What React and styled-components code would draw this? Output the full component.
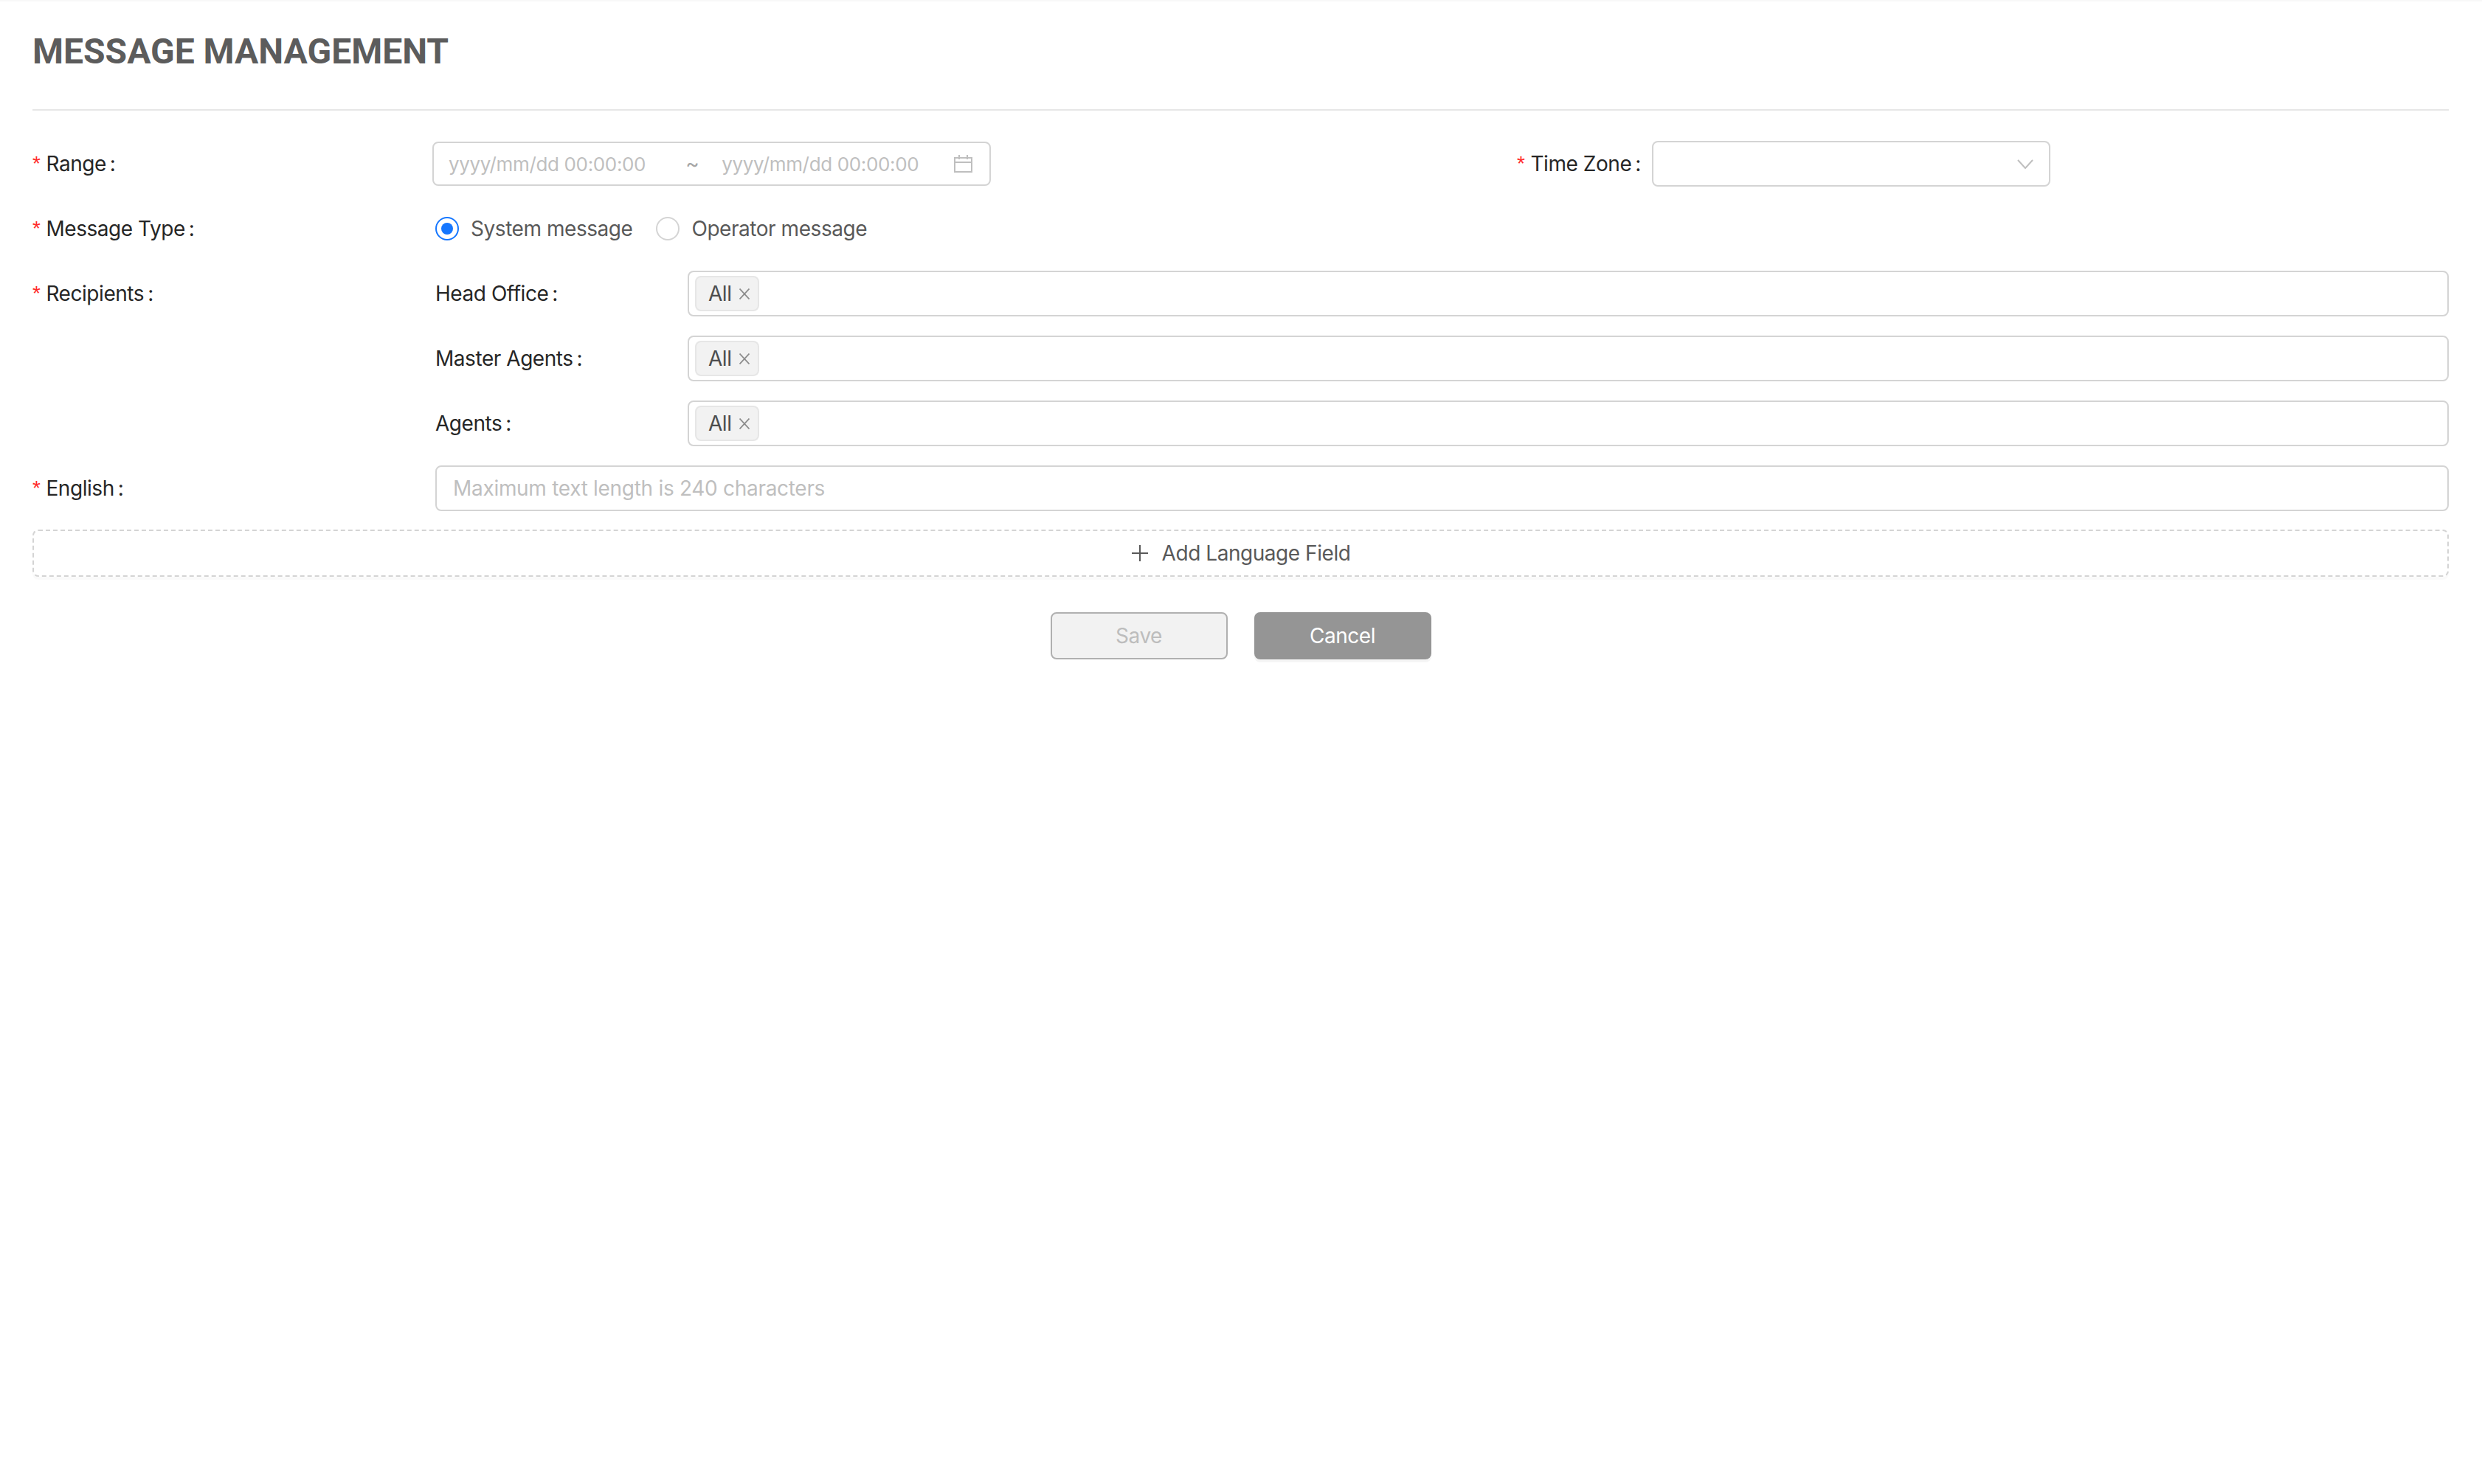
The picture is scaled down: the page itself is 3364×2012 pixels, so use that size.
import React from "react";
import styled, { createGlobalStyle } from "styled-components";

const Global = createGlobalStyle`
  html, body { margin: 0; padding: 0; background: #fff; }
  body { font-family: Inter, "Liberation Sans", sans-serif; font-size: 28px; letter-spacing: -0.45px; color: #262626; }
`;
const Page = styled.div`
  min-height: 2012px; box-sizing: border-box; padding: 0 45px 0 44px;
  border-top: 2px solid #f8f8f8; background: #fff;
`;
const Title = styled.h1`
  margin: 0; height: 148px; display: flex; align-items: center; padding-bottom: 10px; box-sizing: border-box;
  font: 700 48px/1 Roboto, sans-serif; letter-spacing: 0; color: #5c5c5c; border-bottom: 2px solid #e6e6e6;
`;
const Form = styled.div`
  display: flex; flex-direction: column; padding-top: 41px;
`;
const Row = styled.div`
  display: flex; align-items: flex-start; min-height: 62px; margin-bottom: ${p => p.$mb ?? 26}px;
`;
const Label = styled.div`
  width: 546px; flex: none; height: 62px; display: flex; align-items: center; color: #262626; white-space: nowrap;
`;
const Star = styled.span`
  color: #ff2a2a; margin-right: 8px; font: 28px/1 "Liberation Sans", sans-serif;
`;
const Colon = styled.span` margin-left: 5px; `;
const Field = styled.div`
  height: 62px; box-sizing: border-box; border: 2px solid #d4d4d4; border-radius: 8px; background: #fff;
  display: flex; align-items: center; color: #bfbfbf;
`;
const RangeBox = styled(Field)`
  width: 757px; height: 60px; margin-left: -4px; padding: 0 23px 0 20px; margin-top: 1px;
`;
const RangeText = styled.span` white-space: nowrap; font-size: 26px; letter-spacing: -0.35px; `;
const Tilde = styled.span` flex: none; width: 16px; margin-left: 54px; margin-right: 33px; color: #a6a6a6; letter-spacing: 0; `;
const Calendar = styled.svg` margin-left: auto; flex: none; `;
const ZoneGroup = styled.div`
  display: flex; align-items: flex-start; margin-left: 713px;
`;
const ZoneLabel = styled(Label)` width: 183px; `;
const SelectBox = styled(Field)` width: 540px; padding: 0 20px; justify-content: flex-end; `;
const Radios = styled.div` display: flex; align-items: center; height: 62px; `;
const RadioDot = styled.span`
  width: 32px; height: 32px; box-sizing: border-box; border-radius: 50%; flex: none;
  border: 2px solid ${p => (p.$on ? "#1677ff" : "#d4d4d4")};
  display: flex; align-items: center; justify-content: center; background: #fff;
  &::after { content: ""; width: 16px; height: 16px; border-radius: 50%; background: ${p => (p.$on ? "#1677ff" : "transparent")}; }
`;
const RadioText = styled.span` margin-left: 16px; margin-right: 32px; color: #595959; `;
const Nested = styled.div` flex: 1; display: flex; flex-direction: column; `;
const SubRow = styled.div` display: flex; align-items: center; height: 62px; margin-bottom: 26px; `;
const SubLabel = styled.div` width: 342px; flex: none; white-space: nowrap; `;
const TagBox = styled(Field)` flex: 1; padding: 0 8px; `;
const Tag = styled.span`
  height: 48px; box-sizing: border-box; display: inline-flex; align-items: center; padding: 0 11px 0 16px;
  background: #f2f2f2; border: 2px solid #e6e6e6; border-radius: 8px; color: #4d4d4d;
`;
const TagClose = styled.svg` margin-left: 10px; `;
const TextInput = styled(Field)` flex: 1; padding: 0 22px; letter-spacing: -0.3px; `;
const AddBtn = styled.div`
  height: 64px; box-sizing: border-box; border: 2px dashed #d4d4d4; border-radius: 8px; display: flex; align-items: center;
  justify-content: center; color: #595959; box-shadow: 0 4px 0 rgba(0,0,0,.02); margin-top: -1px;
`;
const PlusIcon = styled.svg` margin-right: 18px; `;
const Actions = styled.div` display: flex; justify-content: center; gap: 36px; margin-top: 48px; `;
const Btn = styled.div`
  width: 240px; height: 64px; box-sizing: border-box; border-radius: 8px; display: flex; align-items: center; justify-content: center;
  ${p => p.$primary
    ? "background:#959595;color:#fff;box-shadow:0 4px 0 rgba(0,0,0,.04);"
    : "background:#f2f2f2;border:2px solid #b0b0b0;color:#bdbdbd;"}
`;

const Chevron = () => (
  <svg width="24" height="24" viewBox="0 0 24 24" fill="none" stroke="#bfbfbf" strokeWidth="2"><path d="M2 7l10 11L22 7" /></svg>
);
const Req = ({ children }) => (<><Star>*</Star>{children}<Colon>:</Colon></>);
const Recipient = ({ name }) => (
  <SubRow>
    <SubLabel>{name}<Colon>:</Colon></SubLabel>
    <TagBox>
      <Tag>All
        <TagClose width="14" height="15" viewBox="0 0 14 15" stroke="#8c8c8c" strokeWidth="1.8"><path d="M.5.5l13 14M13.5.5l-13 14" /></TagClose>
      </Tag>
    </TagBox>
  </SubRow>
);

export default function App() {
  return (
    <Page>
      <Global />
      <Title>MESSAGE MANAGEMENT</Title>
      <Form>
        <Row>
          <Label><Req>Range</Req></Label>
          <RangeBox>
            <RangeText>yyyy/mm/dd 00:00:00</RangeText>
            <Tilde>~</Tilde>
            <RangeText>yyyy/mm/dd 00:00:00</RangeText>
            <Calendar width="25" height="24" viewBox="0 0 25 24" fill="none" stroke="#bfbfbf" strokeWidth="2"><path d="M1 4h23v19H1zM1 10h23M7 0v6M18 0v6" /></Calendar>
          </RangeBox>
          <ZoneGroup>
            <ZoneLabel><Req>Time Zone</Req></ZoneLabel>
            <SelectBox><Chevron /></SelectBox>
          </ZoneGroup>
        </Row>
        <Row>
          <Label><Req>Message Type</Req></Label>
          <Radios>
            <RadioDot $on /><RadioText>System message</RadioText>
            <RadioDot /><RadioText>Operator message</RadioText>
          </Radios>
        </Row>
        <Row $mb={0}>
          <Label><Req>Recipients</Req></Label>
          <Nested>
            <Recipient name="Head Office" />
            <Recipient name="Master Agents" />
            <Recipient name="Agents" />
          </Nested>
        </Row>
        <Row>
          <Label><Req>English</Req></Label>
          <TextInput>Maximum text length is 240 characters</TextInput>
        </Row>
        <AddBtn>
          <PlusIcon width="24" height="24" viewBox="0 0 24 24" stroke="#595959" strokeWidth="2"><path d="M12 1v22M1 12h22" /></PlusIcon>
          Add Language Field
        </AddBtn>
        <Actions>
          <Btn>Save</Btn>
          <Btn $primary>Cancel</Btn>
        </Actions>
      </Form>
    </Page>
  );
}
